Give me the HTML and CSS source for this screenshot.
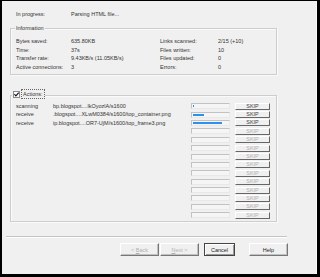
FILE: index.html
```html
<!DOCTYPE html>
<html lang="en">
<head>
  <meta charset="UTF-8" />
  <title>Download progress</title>
  <link rel="stylesheet" href="styles.css">
</head>
<body>
  <div class="window">
    <div class="status">
      <span class="status-label">In progress:</span>
      <span>Parsing HTML file...</span>
    </div>

    <div class="group info">
      <span class="legend">Information</span>
      <div class="info-grid">
        <span>Bytes saved:</span><span>635.80KB</span><span>Links scanned:</span><span>2/15 (+10)</span>
        <span>Time:</span><span>37s</span><span>Files written:</span><span>10</span>
        <span>Transfer rate:</span><span>9.43KB/s (11.05KB/s)</span><span>Files updated:</span><span>0</span>
        <span>Active connections:</span><span>3</span><span>Errors:</span><span>0</span>
      </div>
    </div>

    <div class="group actions">
      <label class="legend check-legend">
        <span class="checkbox">
          <svg width="5" height="5" viewBox="0 0 5 5"><path d="M0.4 2.2 L1.9 3.9 L4.7 0.7" fill="none" stroke="#111" stroke-width="1.1"/></svg>
        </span>
        <span class="focus">Actions:</span>
      </label>
      <div class="action-list" id="actionList"></div>
    </div>

    <div class="separator"></div>

    <div class="buttons">
      <button class="btn" disabled>&lt; <u>B</u>ack</button>
      <button class="btn" disabled><u>N</u>ext &gt;</button>
      <button class="btn default">Cancel</button>
      <button class="btn help">Help</button>
    </div>
  </div>

  <script>
    const actions = [
      { state: "scanning", url: "bp.blogspot....lkOyozlA/s1600", done: 2 },
      { state: "receive", url: " .blogspot....XLwM0384/s1600/top_container.png", done: 30 },
      { state: "receive", url: "ip.blogspot....OR7-UjM/s1600/top_frame3.png", done: 82 }
    ];
    const slots = 14;

    const list = document.getElementById("actionList");
    for (let i = 0; i < slots; i++) {
      const item = actions[i];
      const row = document.createElement("div");
      row.className = "action-row";

      const state = document.createElement("span");
      state.textContent = item ? item.state : "";
      const url = document.createElement("span");
      url.className = "url";
      url.textContent = item ? item.url : "";

      const bar = document.createElement("span");
      bar.className = "bar";
      if (item) {
        const fill = document.createElement("span");
        fill.className = "fill";
        fill.style.width = item.done + "%";
        bar.appendChild(fill);
      }

      const skip = document.createElement("button");
      skip.className = "skip";
      skip.textContent = "SKIP";
      skip.disabled = !item;

      row.append(state, url, bar, skip);
      list.appendChild(row);
    }
  </script>
</body>
</html>
```

FILE: styles.css
```css
body {
  margin: 0;
  width: 320px;
  height: 277px;
  background: #000;
  font-family: "Liberation Sans", Arial, sans-serif;
  font-size: 5.5px;
  color: #333;
  overflow: hidden;
}

.window {
  box-sizing: border-box;
  margin: 1px 3px 0 2px;
  width: 315px;
  height: 273px;
  background: #f0f0f0;
  border-right: 1px solid #fafafa;
  padding: 9px 0 0 8px;
}

.status {
  display: grid;
  grid-template-columns: 55px auto;
  padding-left: 6px;
  line-height: 8px;
}

.group {
  position: relative;
  box-sizing: border-box;
  width: 267px;
  border: 1px solid #cdcdcd;
  box-shadow: inset 1px 1px 0 #fafafa, 1px 1px 0 #fafafa;
}

.legend {
  position: absolute;
  top: -5px;
  left: 4px;
  padding: 0 1px;
  background: #f0f0f0;
  line-height: 8px;
}

.info {
  margin-top: 10px;
  height: 47px;
  padding: 8px 0 0 5px;
}

.info-grid {
  display: grid;
  grid-template-columns: 55px 89px 58px auto;
  grid-auto-rows: 8.5px;
  line-height: 8.5px;
}

.actions {
  margin-top: 20px;
  height: 127px;
  padding: 6px 0 0 5px;
}

.check-legend {
  display: flex;
  align-items: center;
  gap: 2px;
  left: 1px;
  top: -6px;
}

.checkbox {
  display: flex;
  align-items: center;
  justify-content: center;
  width: 5px;
  height: 5px;
  border: 1px solid #8a8a8a;
  background: #fff;
}

.focus {
  padding: 0 1px;
  outline: 1px dotted #666;
  outline-offset: 0;
}

.action-list {
  display: flex;
  flex-direction: column;
}

.action-row {
  display: grid;
  grid-template-columns: 37px 138px 39px 35px;
  align-items: center;
  height: 8.4px;
  line-height: 8.4px;
}

.url {
  white-space: nowrap;
}

.bar {
  display: block;
  box-sizing: border-box;
  height: 6px;
  border: 1px solid #c2c2c2;
  border-right-color: #e8e8e8;
  border-bottom-color: #e8e8e8;
  background: #f5f5f5;
  padding: 1px;
}

.fill {
  display: block;
  height: 100%;
  background: #2f8ff0;
}

.skip {
  box-sizing: border-box;
  margin-left: 5px;
  width: 35px;
  height: 7px;
  padding: 0;
  font: inherit;
  line-height: 5px;
  color: #444;
  background: #f0f0f0;
  border: 1px solid;
  border-color: #fff #666 #666 #fff;
}

.skip:disabled {
  color: #b0b0b0;
}

.separator {
  margin: 14px 0 0 -4px;
  width: 281px;
  border-top: 1px solid #c4c4c4;
  border-bottom: 1px solid #fff;
}

.buttons {
  display: flex;
  justify-content: flex-end;
  width: 278px;
  margin-top: 5px;
}

.btn {
  box-sizing: border-box;
  width: 39px;
  height: 13px;
  padding: 0;
  font: inherit;
  color: #222;
  background: #f0f0f0;
  border: 1px solid;
  border-color: #fff #777 #777 #fff;
  box-shadow: inset -1px -1px 0 #c0c0c0;
}

.btn:disabled {
  color: #b0b0b0;
}

.btn + .btn {
  margin-left: 1px;
}

.btn.default {
  width: 31px;
  margin-left: 5px;
  border-color: #444;
  box-shadow: inset 1px 1px 0 #fff, inset -1px -1px 0 #999;
}

.btn.help {
  margin-left: 14px;
}
```
